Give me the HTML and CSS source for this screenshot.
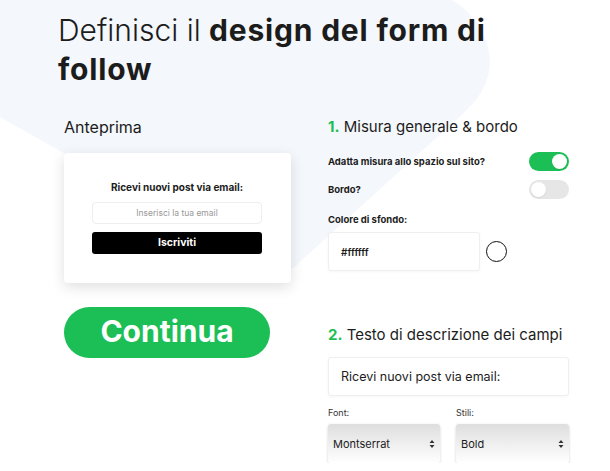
FILE: index.html
```html
<!DOCTYPE html>
<html lang="it">
<head>
    <meta charset="UTF-8">
    <meta name="viewport" content="width=device-width, initial-scale=1.0">
    <title>Design del form di follow</title>
    <link rel="stylesheet" href="styles.css">
</head>
<body>
    <svg class="blob" width="500" height="290" viewBox="0 0 500 290">
        <path d="M0 0 L452 0 C478 16 496 46 488 76 C483 94 472 106 456 120 L302 260 C291 272 280 276 266 268 L0 117 Z" fill="#f4f7fb"/>
    </svg>

    <div class="page">
        <h1 class="title">Definisci il <strong>design del form di follow</strong></h1>

        <div class="columns">
            <div class="col-left">
                <h2 class="section-title">Anteprima</h2>

                <div class="preview">
                    <p class="preview-label">Ricevi nuovi post via email:</p>
                    <div class="preview-input">Inserisci la tua email</div>
                    <div class="preview-button">Iscriviti</div>
                </div>

                <button class="btn-continue">Continua</button>
            </div>

            <div class="col-right">
                <h2 class="section-title step"><span class="num">1.</span> Misura generale &amp; bordo</h2>

                <div class="switch-row">
                    <span class="label">Adatta misura allo spazio sul sito?</span>
                    <span class="switch on"><span class="knob"></span></span>
                </div>
                <div class="switch-row">
                    <span class="label">Bordo?</span>
                    <span class="switch"><span class="knob"></span></span>
                </div>

                <p class="label field-label">Colore di sfondo:</p>
                <div class="color-row">
                    <div class="field color-field">#ffffff</div>
                    <span class="swatch"></span>
                </div>

                <h2 class="section-title step section-2"><span class="num">2.</span> Testo di descrizione dei campi</h2>
                <div class="field text-field">Ricevi nuovi post via email:</div>

                <div class="select-grid">
                    <div>
                        <p class="small-label">Font:</p>
                        <div class="select">
                            <span>Montserrat</span>
                            <svg width="6" height="10" viewBox="0 0 6 10"><path d="M3 1 L5.5 4 H0.5 Z M3 9 L5.5 6 H0.5 Z" fill="#333"/></svg>
                        </div>
                    </div>
                    <div>
                        <p class="small-label">Stili:</p>
                        <div class="select">
                            <span>Bold</span>
                            <svg width="6" height="10" viewBox="0 0 6 10"><path d="M3 1 L5.5 4 H0.5 Z M3 9 L5.5 6 H0.5 Z" fill="#333"/></svg>
                        </div>
                    </div>
                </div>
            </div>
        </div>
    </div>
</body>
</html>
```

FILE: styles.css
```css
body {
    font-family: 'Inter', 'Open Sans', sans-serif;
    margin: 0;
    padding: 0;
    background-color: #ffffff;
    color: #1c1c1c;
    overflow: hidden;
}
.blob {
    position: absolute;
    top: 0;
    left: 0;
    z-index: -1;
}
.page {
    padding: 11px 30px 0 58px;
}
.title {
    margin: 0;
    max-width: 450px;
    font-size: 30px;
    line-height: 39px;
    font-weight: 300;
    color: #1c1c1c;
}
.title strong {
    font-weight: 700;
    letter-spacing: 0.8px;
}
.columns {
    display: grid;
    grid-template-columns: 227px 241px;
    column-gap: 37px;
    margin: 28px 0 0 6px;
}
.section-title {
    margin: 0;
    font-size: 16px;
    line-height: 20px;
    font-weight: 400;
}
.section-title.step {
    font-size: 15px;
}
.num {
    color: #1bbf55;
    font-weight: 700;
}
.preview {
    margin-top: 16px;
    height: 130px;
    box-sizing: border-box;
    padding: 27px 29px 0 28px;
    background: #ffffff;
    border-radius: 4px;
    box-shadow: 0 4px 14px rgba(0, 0, 0, 0.13);
}
.preview-label {
    margin: 0;
    text-align: center;
    font-size: 10px;
    line-height: 14px;
    font-weight: 700;
}
.preview-input {
    margin-top: 8px;
    height: 22px;
    box-sizing: border-box;
    border: 1px solid #eeeeee;
    border-radius: 4px;
    text-align: center;
    font-size: 8.5px;
    line-height: 20px;
    color: #999999;
}
.preview-button {
    margin-top: 8px;
    height: 22px;
    border-radius: 3px;
    background: #000000;
    color: #ffffff;
    text-align: center;
    font-size: 10.5px;
    line-height: 22px;
    font-weight: 700;
}
.btn-continue {
    display: block;
    margin-top: 24px;
    width: 206px;
    height: 51px;
    border: none;
    border-radius: 26px;
    background: #1bbf55;
    color: #ffffff;
    font-family: inherit;
    font-size: 30px;
    font-weight: 700;
    padding: 0 0 3px;
}
.switch-row {
    display: flex;
    justify-content: space-between;
    align-items: center;
    margin-top: 15px;
    height: 19px;
}
.switch-row + .switch-row {
    margin-top: 9px;
}
.label {
    margin: 0;
    font-size: 9.5px;
    font-weight: 700;
}
.switch {
    width: 40px;
    height: 19px;
    border-radius: 10px;
    background: #e6e6e6;
    display: flex;
    align-items: center;
    padding: 0 2px;
    box-sizing: border-box;
}
.switch .knob {
    width: 15px;
    height: 15px;
    border-radius: 50%;
    background: #ffffff;
    box-shadow: 0 1px 2px rgba(0, 0, 0, 0.08);
}
.switch.on {
    background: #1bbf55;
    justify-content: flex-end;
}
.field-label {
    margin-top: 14px;
    line-height: 14px;
}
.color-row {
    display: flex;
    align-items: center;
    gap: 6px;
    margin-top: 5px;
}
.field {
    height: 39px;
    box-sizing: border-box;
    border: 1px solid #efefef;
    border-radius: 3px;
    background: #ffffff;
    box-shadow: 0 1px 3px rgba(0, 0, 0, 0.04);
    display: flex;
    align-items: center;
    padding-left: 12px;
}
.color-field {
    width: 152px;
    font-size: 10px;
    font-weight: 600;
}
.swatch {
    width: 19px;
    height: 19px;
    border: 1px solid #111111;
    border-radius: 50%;
}
.section-2 {
    margin-top: 54px;
}
.text-field {
    margin-top: 12px;
    font-size: 12.5px;
}
.select-grid {
    display: grid;
    grid-template-columns: 112px 113px;
    column-gap: 16px;
    margin-top: 10px;
}
.small-label {
    margin: 0;
    font-size: 9px;
    line-height: 14px;
    color: #333333;
}
.select {
    margin-top: 4px;
    height: 39px;
    box-sizing: border-box;
    display: flex;
    align-items: center;
    justify-content: space-between;
    padding: 0 5px;
    border-radius: 3px;
    background: linear-gradient(#dedede, #ffffff);
    box-shadow: 0 1px 3px rgba(0, 0, 0, 0.18);
    font-size: 11px;
}
```
